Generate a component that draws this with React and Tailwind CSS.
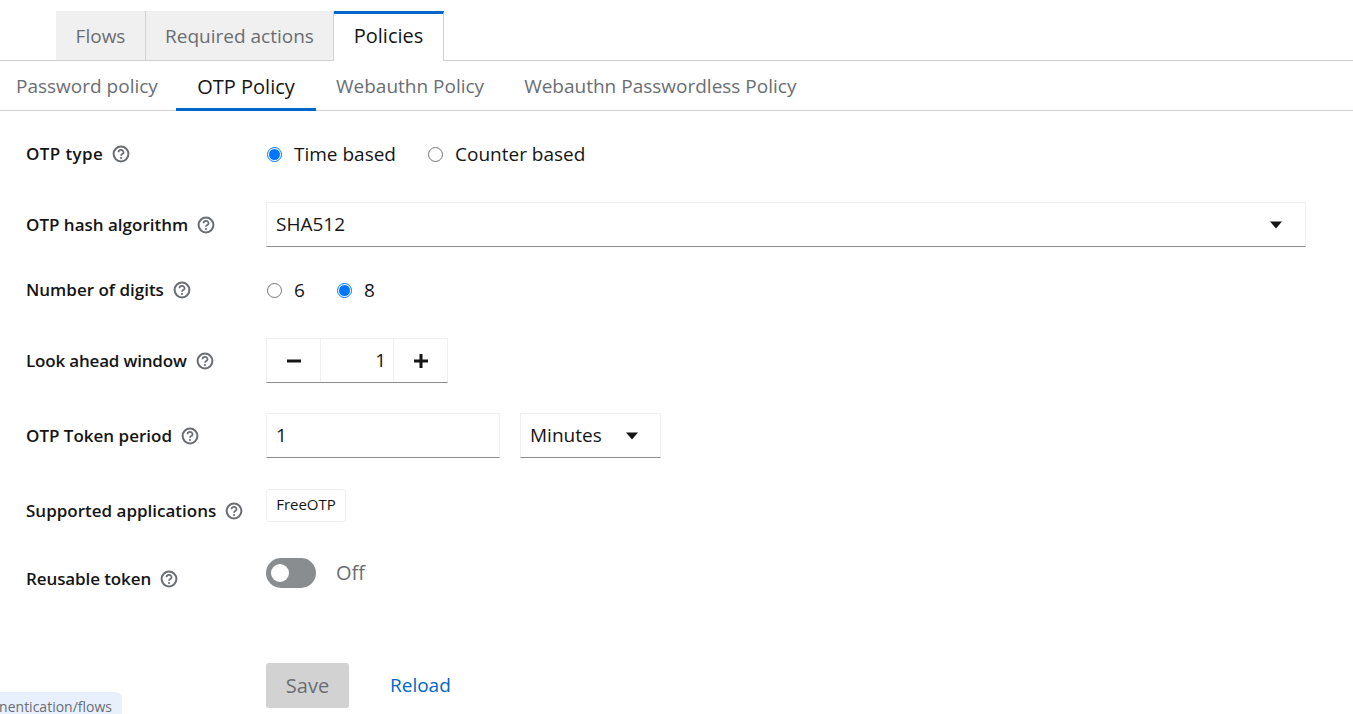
import React from "react";

const FONT = "font-['Open_Sans','Noto_Sans',sans-serif]";

function HelpIcon() {
  return (
    <svg width="18" height="18" viewBox="0 0 18 18" className="shrink-0">
      <circle cx="9" cy="9" r="7.4" fill="none" stroke="#6a6e73" strokeWidth="2" />
      <path d="M6.5 7.2a2.5 2.3 0 1 1 3.8 1.9c-.9.5-1.3.9-1.3 1.7" fill="none" stroke="#6a6e73" strokeWidth="1.7" />
      <circle cx="9" cy="13" r="1.05" fill="#6a6e73" />
    </svg>
  );
}

function Caret() {
  return (
    <svg width="14" height="8" viewBox="0 0 14 8" className="shrink-0">
      <path d="M1 0.5h12L7 7.5z" fill="#151515" />
    </svg>
  );
}

function Radio({ checked }) {
  return checked ? (
    <span className="flex h-[15px] w-[15px] shrink-0 items-center justify-center rounded-full border border-[#0075ff]">
      <span className="h-[11px] w-[11px] rounded-full bg-[#0075ff]" />
    </span>
  ) : (
    <span className="block h-[15px] w-[15px] shrink-0 rounded-full border border-[#767676] bg-white" />
  );
}

function Label({ children, tracking = "" }) {
  return (
    <div className="flex w-[266px] shrink-0 items-center gap-[9px] whitespace-nowrap pl-[26px] text-[17px] font-semibold text-[#151515]">
      <span className={tracking}>{children}</span>
      <HelpIcon />
    </div>
  );
}

function Row({ label, tracking, className, children }) {
  return (
    <div className={`flex items-center ${className}`}>
      <Label tracking={tracking}>{label}</Label>
      {children}
    </div>
  );
}

const fieldBorder = "border border-[#f0f0f0] border-b-[#8a8d90]";

export default function App() {
  return (
    <div className={`relative h-[714px] w-[1353px] overflow-hidden bg-white pt-[11px] text-[#151515] ${FONT}`}>
      {/* main tabs */}
      <div className="flex h-[50px] border-b border-[#d2d2d2] pl-[56px] text-[19px]">
        <div className="flex h-[49px] w-[90px] items-center justify-center border-r border-[#d2d2d2] bg-[#f0f0f0] pt-[2px] text-[#6a6e73]">Flows</div>
        <div className="flex h-[49px] w-[188px] items-center justify-center border-r border-[#d2d2d2] bg-[#f0f0f0] pt-[2px] text-[#6a6e73]">Required actions</div>
        <div className="flex h-[50px] w-[110px] items-center justify-center border-r border-t-[3px] border-r-[#d2d2d2] border-t-[#06c] bg-white pb-[3px] text-[20px]">Policies</div>
      </div>

      {/* sub tabs */}
      <div className="flex h-[50px] border-b border-[#d2d2d2] text-[19px] text-[#6a6e73]">
        <div className="flex w-[176px] items-center pl-4 pt-[2px]">Password policy</div>
        <div className="flex h-[50px] w-[140px] items-center justify-center border-b-[3px] border-[#06c] pt-[4px] text-[20px] text-[#151515]">OTP Policy</div>
        <div className="flex items-center pl-5 pt-[2px]">Webauthn Policy</div>
        <div className="flex items-center pl-10 pt-[2px]">Webauthn Passwordless Policy</div>
      </div>

      {/* form */}
      <Row label="OTP type" tracking="tracking-[0.4px]" className="mt-[28px] h-[30px]">
        <div className="ml-[1px] flex items-center text-[19px]">
          <Radio checked />
          <span className="ml-[12px]">Time based</span>
          <span className="ml-[32px]"><Radio /></span>
          <span className="ml-[12px]">Counter based</span>
        </div>
      </Row>

      <Row label="OTP hash algorithm" className="mt-[33px] h-[45px]">
        <div className={`flex h-[45px] w-[1040px] items-center justify-between pl-[9px] pr-[22px] text-[19px] ${fieldBorder}`}>
          <span>SHA512</span>
          <Caret />
        </div>
      </Row>

      <Row label="Number of digits" className="mt-[28px] h-[30px]">
        <div className="ml-[1px] flex items-center text-[19px]">
          <Radio checked={false} />
          <span className="ml-[12px]">6</span>
          <span className="ml-[32px]"><Radio checked /></span>
          <span className="ml-[12px]">8</span>
        </div>
      </Row>

      <Row label="Look ahead window" tracking="tracking-[-0.18px]" className="mt-[33px] h-[45px]">
        <div className={`flex h-[45px] w-[182px] items-center text-[19px] ${fieldBorder}`}>
          <div className="flex h-full w-[54px] items-center justify-center border-r border-[#f0f0f0]">
            <svg width="14" height="4" viewBox="0 0 14 4"><rect width="14" height="3" y="0.5" fill="#151515" /></svg>
          </div>
          <div className="flex h-full w-[73px] items-center justify-end border-r border-[#f0f0f0] pr-[7px]">1</div>
          <div className="flex h-full flex-1 items-center justify-center">
            <svg width="14" height="14" viewBox="0 0 14 14"><path d="M5.5 0h3v5.5H14v3H8.5V14h-3V8.5H0v-3h5.5z" fill="#151515" /></svg>
          </div>
        </div>
      </Row>

      <Row label="OTP Token period" className="mt-[30px] h-[45px]">
        <div className="flex items-center gap-[20px] text-[19px]">
          <div className={`flex h-[45px] w-[234px] items-center pl-[9px] ${fieldBorder}`}>1</div>
          <div className={`flex h-[45px] w-[141px] items-center gap-[23px] pl-[9px] ${fieldBorder}`}>
            <span>Minutes</span>
            <Caret />
          </div>
        </div>
      </Row>

      <div className="mt-[31px] flex h-[33px] items-start">
        <div className="mt-[9px] flex">
          <Label>Supported applications</Label>
        </div>
        <div className="flex h-[33px] w-[80px] items-center justify-center rounded-[3px] border border-[#f0f0f0] pb-[2px] text-[15px]">FreeOTP</div>
      </div>

      <div className="mt-[36px] flex h-[30px] items-start">
        <div className="mt-[6px] flex h-[30px]">
          <Label tracking="tracking-[-0.1px]">Reusable token</Label>
        </div>
        <div className="flex h-[30px] items-center gap-[20px]">
          <div className="flex h-[30px] w-[50px] items-center rounded-full bg-[#8a8d90] pl-[5px]">
            <span className="h-[18px] w-[18px] rounded-full bg-white" />
          </div>
          <span className="text-[20px] text-[#6a6e73]">Off</span>
        </div>
      </div>

      <div className="ml-[266px] mt-[75px] flex items-center">
        <div className="flex h-[45px] w-[83px] items-center justify-center rounded-[3px] bg-[#d2d2d2] text-[20px] text-[#6a6e73]">Save</div>
        <div className="ml-[41px] text-[19px] text-[#06c]">Reload</div>
      </div>

      {/* browser status bubble */}
      <div className="absolute bottom-0 left-0 flex h-[22px] w-[122px] items-center justify-end rounded-tr-[6px] bg-[#e8f0fe] pr-[10px] pt-[7px] text-[14px] text-[#6a6e73]">
        <span className="whitespace-nowrap">nentication/flows</span>
      </div>
    </div>
  );
}
